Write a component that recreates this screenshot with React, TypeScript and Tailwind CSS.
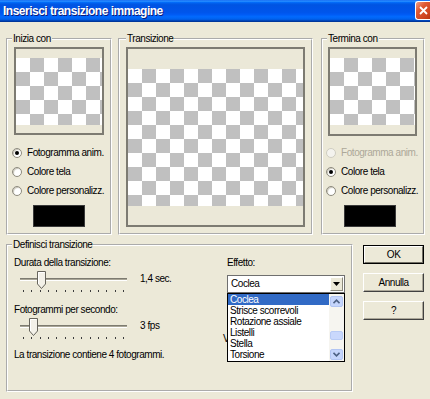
import React from "react";

function Radio({ label, checked = false, disabled = false }: { label: string; checked?: boolean; disabled?: boolean }) {
  return (
    <div className="flex items-center gap-[5px] ml-[-2px] h-[12px] whitespace-nowrap">
      <span
        className={
          disabled
            ? "w-[10px] h-[10px] rounded-full border border-[#cfcdc1] bg-[#f4f3ee] flex items-center justify-center shrink-0"
            : "w-[10px] h-[10px] rounded-full border border-[#8d8a7d] bg-white shadow-[inset_1px_1px_1px_#c8c5b8] flex items-center justify-center shrink-0"
        }
      >
        {checked && <span className="w-[4px] h-[4px] rounded-full bg-black" />}
      </span>
      <span className={disabled ? "text-[#aca899]" : ""}>{label}</span>
    </div>
  );
}

function Thumb() {
  return (
    <svg width="9" height="18" viewBox="0 0 9 18">
      <path d="M0.5 0.5H8.5V13L4.5 17.5L0.5 13Z" fill="#f3f1e8" stroke="#67655c" />
      <path d="M1.5 13V1.5H7.5" stroke="#ffffff" fill="none" />
    </svg>
  );
}

function Ticks() {
  return (
    <div className="absolute left-[9px] w-[101px] top-[21px] flex justify-between">
      {[0, 1, 2, 3, 4, 5, 6, 7, 8, 9, 10, 11, 12].map((i) => (
        <span key={i} className="w-px h-[2px] bg-[#3c3c3c]" />
      ))}
    </div>
  );
}

function Chevron({ up }: { up: boolean }) {
  return (
    <svg width="7" height="5" viewBox="0 0 7 5">
      <path d={up ? "M0.5 4.2L3.5 1.2L6.5 4.2" : "M0.5 0.8L3.5 3.8L6.5 0.8"} stroke="#4d6185" strokeWidth="1.6" fill="none" />
    </svg>
  );
}

const checker =
  "bg-[image:repeating-conic-gradient(#c0c0c0_0%_25%,#ffffff_0%_50%)] bg-[length:28px_28px]";

export default function App() {
  return (
    <div className="w-[430px] h-[399px] bg-[#ece9d8] overflow-hidden font-['Liberation_Sans',Arial,sans-serif] text-[10px] leading-[12px] tracking-[-0.45px] text-black flex flex-col">
      {/* Title bar */}
      <div className="h-[22px] shrink-0 flex items-start bg-[linear-gradient(to_bottom,#0058ee_0%,#3593ff_4%,#288eff_6%,#127dff_8%,#036ffc_10%,#0262ee_14%,#0057e5_20%,#0054e3_24%,#0055eb_56%,#005bf5_66%,#026afe_76%,#0062ef_86%,#0052d6_92%,#0040ab_94%,#003092_100%)]">
        <span className="ml-[3px] mt-[4px] text-white font-bold text-[12px] leading-[14px] tracking-[-0.5px] [text-shadow:1px_1px_#0a1b7a] whitespace-nowrap">
          Inserisci transizione immagine
        </span>
        <div className="ml-auto mt-[1px] w-[15px] h-[19px] rounded-l-[3px] border border-r-0 border-white bg-[linear-gradient(135deg,#f0a088_0%,#e05a34_35%,#cf4420_75%,#b8350f_100%)] flex items-center justify-center">
          <svg width="9" height="9" viewBox="0 0 9 9">
            <path d="M1 1L8 8M8 1L1 8" stroke="#ffffff" strokeWidth="1.8" />
          </svg>
        </div>
      </div>

      {/* Top row */}
      <div className="flex gap-[6px] px-[6px] pt-[11px]">
        <fieldset className="w-[105px] h-[202px] border-2 border-white [border-style:groove] px-[6px] flex flex-col">
          <legend className="ml-[-2px] px-[1px]">Inizia con</legend>
          <div className="mt-[2px] w-[90px] h-[88px] border-2 border-[#7d7b72] bg-[#ebe8d8] flex flex-col justify-center shrink-0">
            <div className={`h-[67px] ${checker}`} />
          </div>
          <div className="mt-[12px] flex flex-col gap-[7px]">
            <Radio label="Fotogramma anim." checked />
            <Radio label="Colore tela" />
            <Radio label="Colore personalizz." />
          </div>
          <div className="mt-[8px] self-center w-[52px] h-[22px] bg-black border border-[#3a3a3a]" />
        </fieldset>

        <fieldset className="w-[196px] h-[202px] border-2 border-white [border-style:groove] px-[6px] flex flex-col">
          <legend className="px-[1px]">Transizione</legend>
          <div className="mt-[2px] w-[179px] h-[180px] border-2 border-[#7d7b72] bg-[#ebe8d8] flex flex-col justify-center shrink-0">
            <div className={`h-[137px] ${checker}`} />
          </div>
        </fieldset>

        <fieldset className="ml-[2px] w-[105px] h-[202px] border-2 border-white [border-style:groove] px-[5px] flex flex-col">
          <legend className="ml-[-1px] px-[1px]">Termina con</legend>
          <div className="mt-[2px] w-[89px] h-[89px] border-2 border-[#7d7b72] bg-[#ebe8d8] flex flex-col justify-center shrink-0">
            <div className={`h-[67px] ${checker}`} />
          </div>
          <div className="mt-[11px] flex flex-col gap-[7px]">
            <Radio label="Fotogramma anim." disabled />
            <Radio label="Colore tela" checked />
            <Radio label="Colore personalizz." />
          </div>
          <div className="mt-[8px] ml-[16px] w-[52px] h-[22px] bg-black border border-[#3a3a3a]" />
        </fieldset>
      </div>

      {/* Bottom row */}
      <div className="flex px-[6px] mt-[4px]">
        <fieldset className="w-[348px] h-[153px] border-2 border-white [border-style:groove] px-[6px] flex">
          <legend className="ml-[-2px] px-[1px]">Definisci transizione</legend>

          <div className="w-[213px] flex flex-col pt-[6px] whitespace-nowrap">
            <span>Durata della transizione:</span>
            <div className="flex gap-[6px]">
              <div className="relative w-[120px] h-[24px] shrink-0">
                <div className="absolute left-[6px] w-[107px] top-[9px] h-[3px] bg-[#a8a596] border-t border-t-[#7d7b70] border-b border-b-white" />
                <div className="absolute left-[23px] top-[2px]">
                  <Thumb />
                </div>
                <Ticks />
              </div>
              <span className="mt-[4px]">1,4 sec.</span>
            </div>
            <span className="mt-[11px]">Fotogrammi per secondo:</span>
            <div className="flex gap-[6px]">
              <div className="relative w-[120px] h-[24px] shrink-0">
                <div className="absolute left-[6px] w-[107px] top-[9px] h-[3px] bg-[#a8a596] border-t border-t-[#7d7b70] border-b border-b-white" />
                <div className="absolute left-[15px] top-[2px]">
                  <Thumb />
                </div>
                <Ticks />
              </div>
              <span className="mt-[4px]">3 fps</span>
            </div>
            <span className="mt-[9px]">La transizione contiene 4 fotogrammi.</span>
          </div>

          <div className="relative w-[118px] flex flex-col pt-[6px]">
            <span>Effetto:</span>
            <span className="absolute left-[-4px] top-[82px]">V</span>
            <div className="relative mt-[6px] h-[18px] w-[118px] border border-[#6f6f6f] bg-white flex items-center">
              <span className="pl-[3px] flex-1">Coclea</span>
              <div className="w-[13px] h-[14px] mr-[1px] bg-[#ece9d8] border border-t-white border-l-white border-r-[#8d8a7d] border-b-[#8d8a7d] flex items-center justify-center">
                <svg width="7" height="4" viewBox="0 0 7 4">
                  <path d="M0 0H7L3.5 4Z" fill="#000000" />
                </svg>
              </div>
              <div className="absolute left-[-1px] top-[17px] w-[118px] h-[69px] border border-black bg-white flex z-10">
                <div className="flex-1 flex flex-col">
                  <span className="h-[11px] leading-[11px] pl-[2px] bg-[#316ac5] text-white">Coclea</span>
                  <span className="h-[11px] leading-[11px] pl-[2px]">Strisce scorrevoli</span>
                  <span className="h-[11px] leading-[11px] pl-[2px]">Rotazione assiale</span>
                  <span className="h-[11px] leading-[11px] pl-[2px]">Listelli</span>
                  <span className="h-[11px] leading-[11px] pl-[2px]">Stella</span>
                  <span className="h-[11px] leading-[11px] pl-[2px]">Torsione</span>
                </div>
                <div className="w-[15px] bg-[#f6f5f0] flex flex-col px-[1px] pt-[2px] pb-[1px]">
                  <div className="h-[11px] rounded-[2px] bg-[#c5d5fc] border border-[#b2c5f3] flex items-center justify-center">
                    <Chevron up />
                  </div>
                  <div className="mt-[24px] h-[9px] rounded-[2px] bg-[#c9d8fc] border border-[#b8cbf5]" />
                  <div className="flex-1" />
                  <div className="h-[11px] rounded-[2px] bg-[#c5d5fc] border border-[#b2c5f3] flex items-center justify-center">
                    <Chevron up={false} />
                  </div>
                </div>
              </div>
            </div>
          </div>
        </fieldset>

        <div className="ml-[10px] pt-[6px] flex flex-col gap-[9px] w-[61px]">
          <div className="h-[19px] border border-black flex">
            <div className="flex-1 border border-t-white border-l-white border-r-[#716f64] border-b-[#716f64] flex items-center justify-center">
              OK
            </div>
          </div>
          <div className="h-[19px] border border-t-white border-l-white border-r-[#404040] border-b-[#404040] shadow-[inset_-1px_-1px_0_#aca899] flex items-center justify-center">
            Annulla
          </div>
          <div className="h-[19px] border border-t-white border-l-white border-r-[#404040] border-b-[#404040] shadow-[inset_-1px_-1px_0_#aca899] flex items-center justify-center">
            ?
          </div>
        </div>
      </div>
    </div>
  );
}
